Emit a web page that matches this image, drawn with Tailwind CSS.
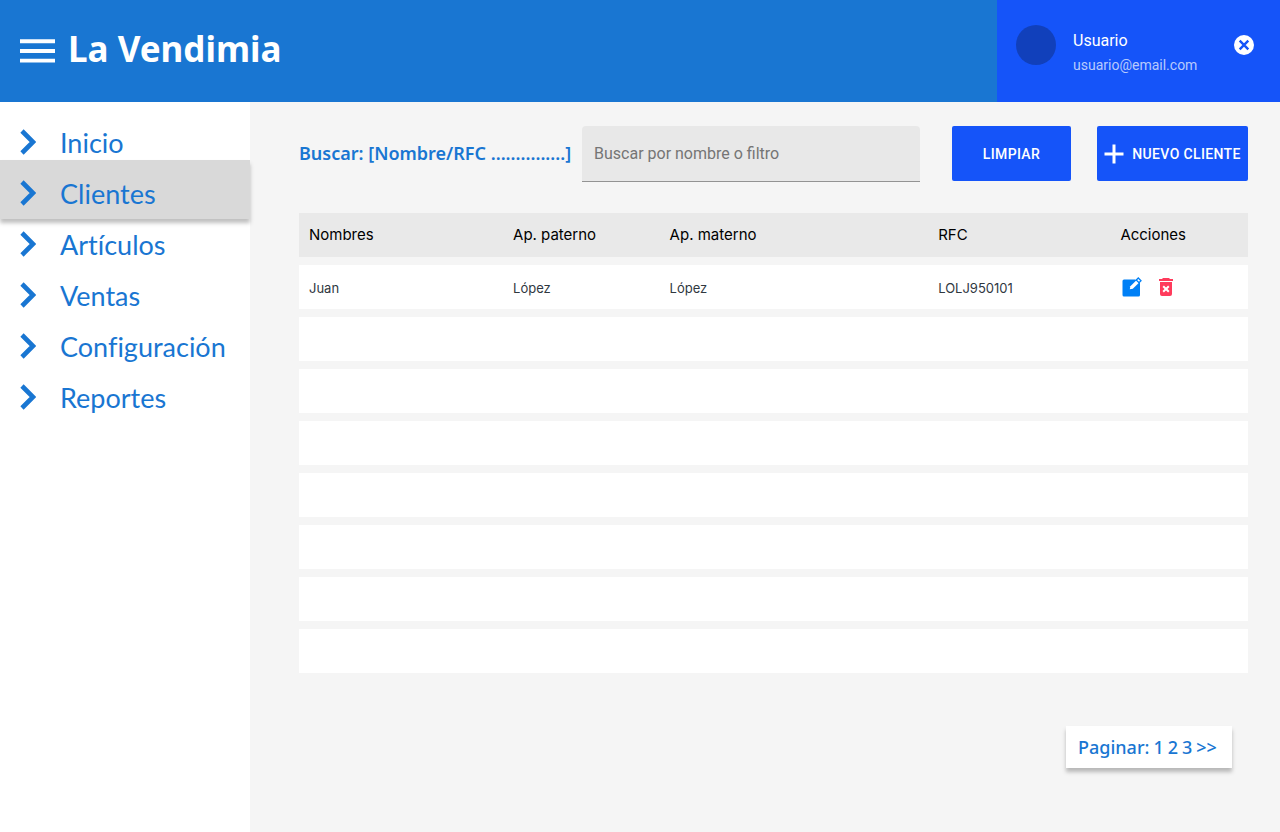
<!DOCTYPE html>
<html lang="es">
<head>
<meta charset="utf-8">
<meta name="viewport" content="width=device-width, initial-scale=1">
<title>La Vendimia - Clientes</title>
<script src="https://cdn.jsdelivr.net/npm/@tailwindcss/browser@4"></script>
</head>
<body class="flex min-h-screen flex-col bg-[#f5f5f5] font-['Roboto',sans-serif]">
<svg class="hidden" aria-hidden="true">
  <symbol id="chevron" viewBox="0 0 16 26"><path d="M2 2 13 13 2 24" fill="none" stroke="currentColor" stroke-width="4.6"/></symbol>
</svg>

<header class="flex h-[102px] bg-[#1976d2] text-white">
  <div class="flex flex-1 items-center gap-[13px] pl-5">
    <button type="button" aria-label="Menú">
      <svg class="block h-6 w-[35px]" viewBox="0 0 35 24" fill="currentColor"><path d="M0 .3h35v3.9H0zM0 10h35v3.9H0zM0 19.7h35v3.9H0z"/></svg>
    </button>
    <h1 class="pb-1 font-['Noto_Sans',sans-serif] text-[35px] leading-[48px] font-bold">La Vendimia</h1>
  </div>
  <div class="flex w-[283px] items-start bg-[#1554f9] pt-[25px] pr-[26px] pl-[19px]">
    <div class="size-10 rounded-full bg-[#1140bb]"></div>
    <div class="ml-[17px] flex-1 pt-1">
      <p class="text-base leading-6">Usuario</p>
      <p class="text-sm leading-6 text-white/70">usuario@email.com</p>
    </div>
    <button type="button" aria-label="Cerrar sesión" class="mt-[10px]">
      <svg class="block size-5" viewBox="0 0 20 20"><circle cx="10" cy="10" r="10" fill="#fff"/><path d="m5.7 5.7 8.6 8.6m0-8.6-8.6 8.6" stroke="#1554f9" stroke-width="2.4"/></svg>
    </button>
  </div>
</header>

<div class="flex flex-1">
  <nav class="w-[250px] shrink-0 bg-white pt-[15px] font-['Lato',sans-serif] text-[27px] leading-[51px] text-[#1976d2] [font-variant-ligatures:none]">
    <ul>
      <li><a href="#" class="flex items-center gap-6 pl-5"><svg class="mb-px h-[26px] w-4"><use href="#chevron"/></svg>Inicio</a></li>
      <li><a href="#" aria-current="page" class="-mt-2 flex items-center gap-6 bg-[#d9d9d9] pt-2 pl-5 shadow-[0_4px_4px_rgba(0,0,0,0.25)]"><svg class="mb-px h-[26px] w-4"><use href="#chevron"/></svg>Clientes</a></li>
      <li><a href="#" class="flex items-center gap-6 pl-5"><svg class="mb-px h-[26px] w-4"><use href="#chevron"/></svg>Artículos</a></li>
      <li><a href="#" class="flex items-center gap-6 pl-5"><svg class="mb-px h-[26px] w-4"><use href="#chevron"/></svg>Ventas</a></li>
      <li><a href="#" class="flex items-center gap-6 pl-5"><svg class="mb-px h-[26px] w-4"><use href="#chevron"/></svg>Configuración</a></li>
      <li><a href="#" class="flex items-center gap-6 pl-5"><svg class="mb-px h-[26px] w-4"><use href="#chevron"/></svg>Reportes</a></li>
    </ul>
  </nav>

  <main class="min-w-0 flex-1 pt-6 pr-8 pl-[49px]">
    <form class="flex items-start">
      <label for="buscar" class="w-[283px] shrink-0 font-['Noto_Sans',sans-serif] text-lg leading-[55px] font-semibold whitespace-nowrap text-[#1976d2]">Buscar: [Nombre/RFC ...............]</label>
      <input id="buscar" type="search" placeholder="Buscar por nombre o filtro" class="h-14 min-w-0 flex-1 rounded-t border-b border-[#939393] bg-[#e8e8e8] px-3 text-base text-black placeholder:text-[#757575]">
      <button type="reset" class="ml-8 h-[55px] w-[119px] rounded-xs bg-[#1554f9] pt-px text-sm font-medium tracking-wide text-white">LIMPIAR</button>
      <button type="button" class="ml-[26px] flex h-[55px] w-[151px] items-center justify-center gap-2 rounded-xs bg-[#1554f9] pt-px text-sm font-medium tracking-wide whitespace-nowrap text-white">
        <svg class="size-5" viewBox="0 0 20 20"><path d="M10 .5v19M.5 10h19" stroke="#fff" stroke-width="3"/></svg>NUEVO CLIENTE</button>
    </form>

    <table class="mt-[23px] w-full table-fixed border-separate border-spacing-x-0 border-spacing-y-2 text-left font-['Inter',sans-serif]">
      <colgroup><col class="w-[21.5%]"><col class="w-[16.5%]"><col class="w-[28.3%]"><col class="w-[19.2%]"><col></colgroup>
      <thead>
        <tr class="h-11 bg-[#e9e9e9] text-[15px] text-black">
          <th scope="col" class="px-[10px] font-normal">Nombres</th><th scope="col" class="px-[10px] font-normal">Ap. paterno</th><th scope="col" class="px-[10px] font-normal">Ap. materno</th><th scope="col" class="px-[10px] font-normal">RFC</th><th scope="col" class="px-[10px] font-normal">Acciones</th>
        </tr>
      </thead>
      <tbody class="text-[13px] text-[#30383f]">
        <tr class="h-11 bg-white">
          <td class="px-[10px] pt-[3px]">Juan</td><td class="px-[10px] pt-[3px]">López</td><td class="px-[10px] pt-[3px]">López</td><td class="px-[10px] pt-[3px]">LOLJ950101</td>
          <td class="px-3">
            <div class="flex items-center gap-4">
              <button type="button" aria-label="Editar"><svg class="block size-5" viewBox="0 0 20 20"><path d="M2 2.500h16V18a1.500 1.500 0 0 1-1.500 1.500H2A1.500 1.500 0 0 1 .5 18V4A1.500 1.500 0 0 1 2 2.500Z" fill="#0080f6"/><path d="M13 1h7v6h-2V5.500L16 2.500h-3Z" fill="#fff"/><path d="m7.800 12.200.6-3 5.800-5.800 2.500 2.500-5.900 5.800Z" fill="#fff"/><path d="m14.300 3 2-2 2.700 2.700-2 2Z" fill="#fff" stroke="#0080f6" stroke-width="1.300"/></svg></button>
              <button type="button" aria-label="Eliminar"><svg class="block h-5 w-4" viewBox="0 0 16 20"><path d="M5 1h6l1 1h3v2H1V2h3ZM2 5h12v12a2 2 0 0 1-2 2H4a2 2 0 0 1-2-2Z" fill="#ff3b5c"/><path d="m5.200 9.200 5.600 5.600m0-5.600-5.600 5.600" stroke="#fff" stroke-width="2"/></svg></button>
            </div>
          </td>
        </tr>
        <tr class="h-11 bg-white"><td colspan="5"></td></tr>
        <tr class="h-11 bg-white"><td colspan="5"></td></tr>
        <tr class="h-11 bg-white"><td colspan="5"></td></tr>
        <tr class="h-11 bg-white"><td colspan="5"></td></tr>
        <tr class="h-11 bg-white"><td colspan="5"></td></tr>
        <tr class="h-11 bg-white"><td colspan="5"></td></tr>
        <tr class="h-11 bg-white"><td colspan="5"></td></tr>
      </tbody>
    </table>

    <nav aria-label="Paginación" class="mt-[45px] mr-4 ml-auto flex h-[42px] w-[166px] items-center gap-1 bg-white pl-3 font-['Noto_Sans',sans-serif] text-lg font-medium whitespace-nowrap text-[#1976d2] shadow-[0_4px_4px_rgba(0,0,0,0.25)]">
      <span>Paginar:</span><a href="#">1</a><a href="#">2</a><a href="#">3</a><a href="#">&gt;&gt;</a>
    </nav>
  </main>
</div>
</body>
</html>
